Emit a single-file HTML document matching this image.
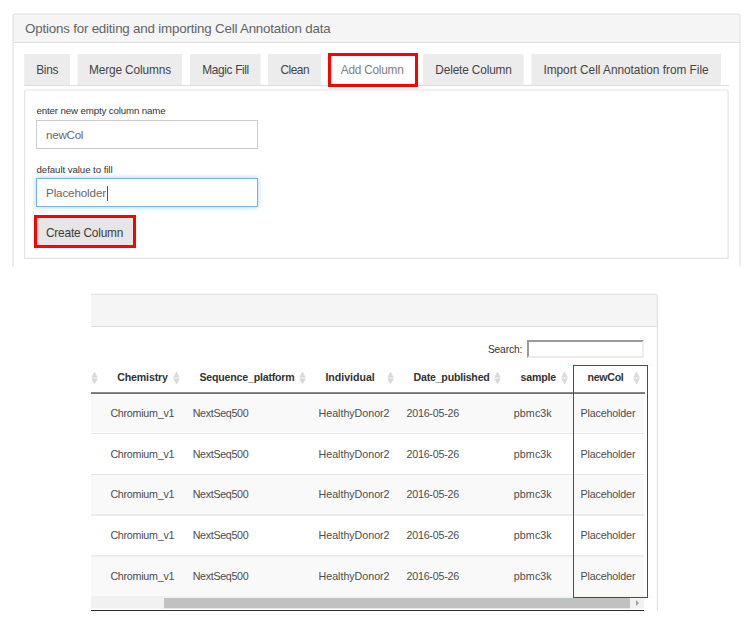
<!DOCTYPE html>
<html>
<head>
<meta charset="utf-8">
<title>Cell Annotation</title>
<style>
html,body{margin:0;padding:0;}
body{width:751px;height:626px;overflow:hidden;background:#fff;position:relative;font-family:"Liberation Sans",sans-serif;color:#333;}
.a{position:absolute;box-sizing:border-box;}
.t{position:absolute;white-space:nowrap;line-height:16px;height:16px;font-size:11.5px;color:#333;}
.tab{position:absolute;top:54px;height:31px;background:#ededed;}
.row{position:absolute;left:91px;width:553px;}
.odd{background:#f9f9f9;}
.sep{position:absolute;left:91px;width:553px;height:1px;background:#e3e3e3;}
.si{position:absolute;width:7px;height:14px;top:371px;}
</style>
</head>
<body>

<!-- ===== Panel 1 ===== -->
<div class="a" style="left:13px;top:14px;width:727px;height:29px;background:#f5f5f5;border-bottom:1px solid #ddd;border-radius:3px 3px 0 0;"></div>
<svg class="a" style="left:0;top:0;" width="751" height="300" viewBox="0 0 751 300"><path d="M13 267 V16 Q13 14 15 14 H738 Q740 14 740 16 V267" fill="none" stroke="#dedede" stroke-width="1.1"/></svg>

<!-- tabs -->
<svg class="a" style="left:0;top:50px;" width="751" height="40" viewBox="0 50 751 40"><rect x="24.2" y="54" width="45.8" height="31" fill="#ececec"/><rect x="77.6" y="54" width="104.3" height="31" fill="#ececec"/><rect x="190" y="54" width="70.5" height="31" fill="#ececec"/><rect x="268" y="54" width="53.2" height="31" fill="#ececec"/><rect x="423.2" y="54" width="100.4" height="31" fill="#ececec"/><rect x="531.5" y="54" width="189.5" height="31" fill="#ececec"/></svg>
<div class="a" style="left:24px;top:85px;width:705px;height:1px;background:#dcdcdc;"></div>
<div class="a" style="left:328px;top:53px;width:90px;height:34px;border:3px solid #ff0000;background:#fff;"></div>

<!-- tab content -->
<svg class="a" style="left:0;top:80px;" width="751" height="190" viewBox="0 80 751 190"><path d="M24.6 258.4 V92 Q24.6 90 26.6 90 H726 Q728.1 90 728.1 92 V258.4 Z" fill="#fff" stroke="#e3e3e3" stroke-width="1.15"/></svg>
<div class="a" style="left:36px;top:120px;width:222px;height:29px;border:1px solid #ccc;background:#fff;"></div>
<div class="a" style="left:36px;top:178px;width:222px;height:29px;border:1px solid #74b5ea;background:#fff;box-shadow:0 0 5px rgba(102,175,233,.6);"></div>
<div class="a" style="left:107px;top:186px;width:1px;height:15px;background:#555;"></div>

<!-- create button -->
<div class="a" style="left:34px;top:215px;width:102px;height:33px;border:3px solid #ff0000;background:#e6e6e6;"></div>

<!-- ===== Panel 2 ===== -->
<div class="a" style="left:91px;top:294px;width:566px;height:33px;background:#f5f5f5;border-bottom:1px solid #ddd;border-radius:0 3px 0 0;"></div>
<svg class="a" style="left:0;top:285px;" width="751" height="341" viewBox="0 285 751 341"><path d="M91 294.3 H655.4 Q657.4 294.3 657.4 296.3 V610.8" fill="none" stroke="#dedede" stroke-width="1.1"/></svg>

<!-- search -->
<div class="a" style="left:527px;top:340px;width:117px;height:18px;border:2px solid;border-color:#9a9a9a #ececec #ececec #9a9a9a;background:#fff;"></div>

<!-- rows -->
<div class="row odd" style="top:395px;height:37px;"></div>
<div class="row" style="top:432px;height:1px;background:#fcfcfc;"></div>
<div class="sep" style="top:433px;background:#e6e6e6;"></div>
<div class="sep" style="top:474px;background:#e4e4e4;"></div>
<div class="sep" style="top:475px;background:#fbfbfb;"></div>
<div class="row odd" style="top:476px;height:37px;"></div>
<div class="row" style="top:513px;height:1px;background:#fbfbfb;"></div>
<div class="sep" style="top:514px;height:2px;background:#ebebeb;"></div>
<div class="sep" style="top:555px;background:#e8e8e8;"></div>
<div class="sep" style="top:556px;background:#f2f2f2;"></div>
<div class="sep" style="top:557px;background:#f7f7f7;"></div>
<div class="row odd" style="top:558px;height:38px;"></div>

<!-- header border -->
<div class="a" style="left:91px;top:392px;width:554px;height:1px;background:#8a8a8a;"></div>
<div class="a" style="left:91px;top:393px;width:554px;height:1px;background:#6e6e6e;"></div>

<!-- scrollbar -->
<div class="a" style="left:91px;top:596px;width:553px;height:12px;background:#f1f1f1;"></div>
<div class="a" style="left:91px;top:608px;width:553px;height:1px;background:#f7f7f7;"></div>
<div class="a" style="left:164px;top:598px;width:466px;height:10px;background:#c1c1c1;"></div>
<div class="a" style="left:164px;top:608px;width:466px;height:1px;background:#e6e6e6;"></div>
<div class="a" style="left:636px;top:600px;width:0;height:0;border-left:3.5px solid #a3a3a3;border-top:3px solid transparent;border-bottom:3px solid transparent;"></div>
<div class="a" style="left:91px;top:610px;width:553px;height:1px;background:#2e2e2e;"></div>

<!-- sort icons -->
<svg class="si" style="left:90.5px;" viewBox="0 0 7 14"><path d="M0.3 6.4 H6.7 V7.8 H0.3 Z" fill="#ececec"/><path d="M3.5 0.6 L6.8 6.4 L0.2 6.4 Z M3.5 13.2 L6.8 7.8 L0.2 7.8 Z" fill="#d9d9d9"/></svg>
<svg class="si" style="left:172.7px;" viewBox="0 0 7 14"><path d="M0.3 6.4 H6.7 V7.8 H0.3 Z" fill="#ececec"/><path d="M3.5 0.6 L6.8 6.4 L0.2 6.4 Z M3.5 13.2 L6.8 7.8 L0.2 7.8 Z" fill="#d9d9d9"/></svg>
<svg class="si" style="left:298.7px;" viewBox="0 0 7 14"><path d="M0.3 6.4 H6.7 V7.8 H0.3 Z" fill="#ececec"/><path d="M3.5 0.6 L6.8 6.4 L0.2 6.4 Z M3.5 13.2 L6.8 7.8 L0.2 7.8 Z" fill="#d9d9d9"/></svg>
<svg class="si" style="left:387.0px;" viewBox="0 0 7 14"><path d="M0.3 6.4 H6.7 V7.8 H0.3 Z" fill="#ececec"/><path d="M3.5 0.6 L6.8 6.4 L0.2 6.4 Z M3.5 13.2 L6.8 7.8 L0.2 7.8 Z" fill="#d9d9d9"/></svg>
<svg class="si" style="left:494.2px;" viewBox="0 0 7 14"><path d="M0.3 6.4 H6.7 V7.8 H0.3 Z" fill="#ececec"/><path d="M3.5 0.6 L6.8 6.4 L0.2 6.4 Z M3.5 13.2 L6.8 7.8 L0.2 7.8 Z" fill="#d9d9d9"/></svg>
<svg class="si" style="left:560.8px;" viewBox="0 0 7 14"><path d="M0.3 6.4 H6.7 V7.8 H0.3 Z" fill="#ececec"/><path d="M3.5 0.6 L6.8 6.4 L0.2 6.4 Z M3.5 13.2 L6.8 7.8 L0.2 7.8 Z" fill="#d9d9d9"/></svg>
<svg class="si" style="left:633.0px;" viewBox="0 0 7 14"><path d="M0.3 6.4 H6.7 V7.8 H0.3 Z" fill="#ececec"/><path d="M3.5 0.6 L6.8 6.4 L0.2 6.4 Z M3.5 13.2 L6.8 7.8 L0.2 7.8 Z" fill="#d9d9d9"/></svg>

<!-- text -->
<span class="t" style="left:25px;top:20.9px;font-size:13.39px;letter-spacing:-0.208px;color:#646464;">Options for editing and importing Cell Annotation data</span>
<span class="t" style="left:36.2px;top:61.8px;font-size:11.85px;letter-spacing:-0.262px;color:#444;">Bins</span>
<span class="t" style="left:89px;top:61.8px;font-size:11.85px;letter-spacing:-0.124px;color:#444;">Merge Columns</span>
<span class="t" style="left:202.3px;top:61.8px;font-size:11.85px;letter-spacing:-0.342px;color:#444;">Magic Fill</span>
<span class="t" style="left:280.5px;top:61.8px;font-size:11.85px;letter-spacing:-0.471px;color:#444;">Clean</span>
<span class="t" style="left:340.8px;top:61.8px;font-size:11.85px;letter-spacing:-0.249px;color:#808080;">Add Column</span>
<span class="t" style="left:435.3px;top:61.8px;font-size:11.85px;letter-spacing:-0.142px;color:#444;">Delete Column</span>
<span class="t" style="left:543.4px;top:61.8px;font-size:11.85px;letter-spacing:-0.022px;color:#444;">Import Cell Annotation from File</span>
<span class="t" style="left:36.5px;top:102.9px;font-size:9.73px;letter-spacing:-0.144px;color:#333;">enter new empty column name</span>
<span class="t" style="left:36.5px;top:161.9px;font-size:9.73px;letter-spacing:-0.086px;color:#333;">default value to fill</span>
<span class="t" style="left:46px;top:126.7px;font-size:11.64px;letter-spacing:-0.264px;color:#686868;">newCol</span>
<span class="t" style="left:46px;top:184.7px;font-size:11.64px;letter-spacing:-0.128px;color:#686868;">Placeholder</span>
<span class="t" style="left:46px;top:224.6px;font-size:11.85px;letter-spacing:-0.197px;color:#3a3a3a;">Create Column</span>
<span class="t" style="left:487.9px;top:341.8px;font-size:10.2px;letter-spacing:-0.116px;color:#333;">Search:</span>
<span class="t" style="left:117.2px;top:368.5px;font-size:10.61px;letter-spacing:-0.143px;color:#333;font-weight:bold;">Chemistry</span>
<span class="t" style="left:199.5px;top:368.5px;font-size:10.61px;letter-spacing:-0.204px;color:#333;font-weight:bold;">Sequence_platform</span>
<span class="t" style="left:325.4px;top:368.5px;font-size:10.61px;letter-spacing:-0.012px;color:#333;font-weight:bold;">Individual</span>
<span class="t" style="left:413.5px;top:368.5px;font-size:10.61px;letter-spacing:-0.207px;color:#333;font-weight:bold;">Date_published</span>
<span class="t" style="left:520.5px;top:368.5px;font-size:10.61px;letter-spacing:-0.180px;color:#333;font-weight:bold;">sample</span>
<span class="t" style="left:587.6px;top:368.5px;font-size:10.61px;letter-spacing:-0.306px;color:#333;font-weight:bold;">newCol</span>
<span class="t" style="left:110.4px;top:404.7px;font-size:10.71px;letter-spacing:-0.257px;color:#4c4c4c;">Chromium_v1</span>
<span class="t" style="left:192.7px;top:404.7px;font-size:10.71px;letter-spacing:-0.322px;color:#4c4c4c;">NextSeq500</span>
<span class="t" style="left:318.6px;top:404.7px;font-size:10.71px;letter-spacing:-0.039px;color:#4c4c4c;">HealthyDonor2</span>
<span class="t" style="left:406.5px;top:404.7px;font-size:10.71px;letter-spacing:-0.235px;color:#4c4c4c;">2016-05-26</span>
<span class="t" style="left:513.8px;top:404.7px;font-size:10.71px;letter-spacing:0.086px;color:#4c4c4c;">pbmc3k</span>
<span class="t" style="left:580.5px;top:404.7px;font-size:10.71px;letter-spacing:-0.157px;color:#4c4c4c;">Placeholder</span>
<span class="t" style="left:110.4px;top:445.5px;font-size:10.71px;letter-spacing:-0.257px;color:#4c4c4c;">Chromium_v1</span>
<span class="t" style="left:192.7px;top:445.5px;font-size:10.71px;letter-spacing:-0.322px;color:#4c4c4c;">NextSeq500</span>
<span class="t" style="left:318.6px;top:445.5px;font-size:10.71px;letter-spacing:-0.039px;color:#4c4c4c;">HealthyDonor2</span>
<span class="t" style="left:406.5px;top:445.5px;font-size:10.71px;letter-spacing:-0.235px;color:#4c4c4c;">2016-05-26</span>
<span class="t" style="left:513.8px;top:445.5px;font-size:10.71px;letter-spacing:0.086px;color:#4c4c4c;">pbmc3k</span>
<span class="t" style="left:580.5px;top:445.5px;font-size:10.71px;letter-spacing:-0.157px;color:#4c4c4c;">Placeholder</span>
<span class="t" style="left:110.4px;top:486.1px;font-size:10.71px;letter-spacing:-0.257px;color:#4c4c4c;">Chromium_v1</span>
<span class="t" style="left:192.7px;top:486.1px;font-size:10.71px;letter-spacing:-0.322px;color:#4c4c4c;">NextSeq500</span>
<span class="t" style="left:318.6px;top:486.1px;font-size:10.71px;letter-spacing:-0.039px;color:#4c4c4c;">HealthyDonor2</span>
<span class="t" style="left:406.5px;top:486.1px;font-size:10.71px;letter-spacing:-0.235px;color:#4c4c4c;">2016-05-26</span>
<span class="t" style="left:513.8px;top:486.1px;font-size:10.71px;letter-spacing:0.086px;color:#4c4c4c;">pbmc3k</span>
<span class="t" style="left:580.5px;top:486.1px;font-size:10.71px;letter-spacing:-0.157px;color:#4c4c4c;">Placeholder</span>
<span class="t" style="left:110.4px;top:526.8px;font-size:10.71px;letter-spacing:-0.257px;color:#4c4c4c;">Chromium_v1</span>
<span class="t" style="left:192.7px;top:526.8px;font-size:10.71px;letter-spacing:-0.322px;color:#4c4c4c;">NextSeq500</span>
<span class="t" style="left:318.6px;top:526.8px;font-size:10.71px;letter-spacing:-0.039px;color:#4c4c4c;">HealthyDonor2</span>
<span class="t" style="left:406.5px;top:526.8px;font-size:10.71px;letter-spacing:-0.235px;color:#4c4c4c;">2016-05-26</span>
<span class="t" style="left:513.8px;top:526.8px;font-size:10.71px;letter-spacing:0.086px;color:#4c4c4c;">pbmc3k</span>
<span class="t" style="left:580.5px;top:526.8px;font-size:10.71px;letter-spacing:-0.157px;color:#4c4c4c;">Placeholder</span>
<span class="t" style="left:110.4px;top:567.5px;font-size:10.71px;letter-spacing:-0.257px;color:#4c4c4c;">Chromium_v1</span>
<span class="t" style="left:192.7px;top:567.5px;font-size:10.71px;letter-spacing:-0.322px;color:#4c4c4c;">NextSeq500</span>
<span class="t" style="left:318.6px;top:567.5px;font-size:10.71px;letter-spacing:-0.039px;color:#4c4c4c;">HealthyDonor2</span>
<span class="t" style="left:406.5px;top:567.5px;font-size:10.71px;letter-spacing:-0.235px;color:#4c4c4c;">2016-05-26</span>
<span class="t" style="left:513.8px;top:567.5px;font-size:10.71px;letter-spacing:0.086px;color:#4c4c4c;">pbmc3k</span>
<span class="t" style="left:580.5px;top:567.5px;font-size:10.71px;letter-spacing:-0.157px;color:#4c4c4c;">Placeholder</span>

<!-- red highlight rectangle -->
<div class="a" style="left:573px;top:365px;width:75px;height:233px;border:1px solid #ff0000;"></div>

</body>
</html>
